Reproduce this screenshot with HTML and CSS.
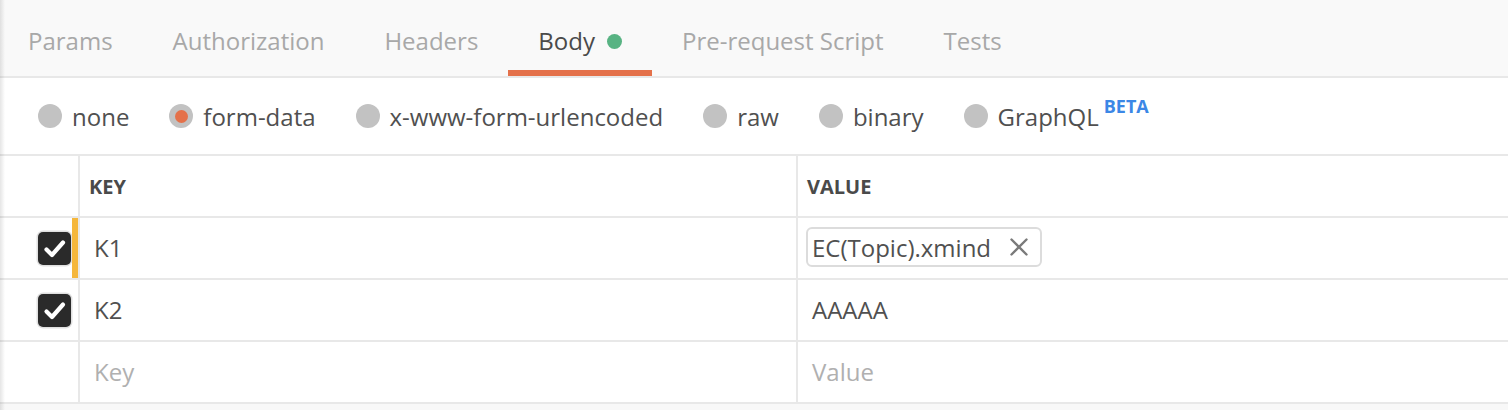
FILE: index.html
```html
<!DOCTYPE html>
<html>
<head>
<meta charset="utf-8">
<link rel="stylesheet" href="styles.css">
</head>
<body>
<div class="page">
  <nav class="tabs">
    <div class="tab">Params</div>
    <div class="tab">Authorization</div>
    <div class="tab">Headers</div>
    <div class="tab active">Body<span class="dot"></span></div>
    <div class="tab">Pre-request Script</div>
    <div class="tab">Tests</div>
  </nav>
  <div class="modes">
    <label class="mode"><span class="radio"></span>none</label>
    <label class="mode"><span class="radio on"></span>form-data</label>
    <label class="mode"><span class="radio"></span>x-www-form-urlencoded</label>
    <label class="mode"><span class="radio"></span>raw</label>
    <label class="mode"><span class="radio"></span>binary</label>
    <label class="mode"><span class="radio"></span>GraphQL<sup class="beta">BETA</sup></label>
  </div>
  <div class="table">
    <div class="row head">
      <div class="cell check"></div>
      <div class="cell">KEY</div>
      <div class="cell">VALUE</div>
    </div>
    <div class="row">
      <div class="cell check">
        <span class="box"><svg viewBox="0 0 33 33" width="33" height="33"><path d="M8.5 17.5 L14 23 L25 10.5" fill="none" stroke="#fff" stroke-width="4.2" stroke-linecap="round" stroke-linejoin="round"/></svg></span>
        <span class="bar edited"></span>
      </div>
      <div class="cell text">K1</div>
      <div class="cell chipcell">
        <span class="chip">EC(Topic).xmind<svg class="x" viewBox="0 0 20 20" width="20" height="20"><path d="M2.5 2.5 L17.5 17.5 M17.5 2.5 L2.5 17.5" stroke="#7a7a7a" stroke-width="2.4" stroke-linecap="round"/></svg></span>
      </div>
    </div>
    <div class="row">
      <div class="cell check">
        <span class="box"><svg viewBox="0 0 33 33" width="33" height="33"><path d="M8.5 17.5 L14 23 L25 10.5" fill="none" stroke="#fff" stroke-width="4.2" stroke-linecap="round" stroke-linejoin="round"/></svg></span>
        <span class="bar"></span>
      </div>
      <div class="cell text">K2</div>
      <div class="cell text">AAAAA</div>
    </div>
    <div class="row">
      <div class="cell check"><span class="bar"></span></div>
      <div class="cell text placeholder">Key</div>
      <div class="cell text placeholder">Value</div>
    </div>
  </div>
</div>
</body>
</html>
```

FILE: styles.css
```css
html, body {
  margin: 0;
  padding: 0;
  background: #f8f8f8;
}
body {
  font-family: "Open Sans", "Liberation Sans", sans-serif;
  color: #505050;
}
.page {
  position: relative;
  width: 1508px;
  height: 410px;
  overflow: hidden;
}
.page::before {
  content: "";
  position: absolute;
  left: 0;
  top: 0;
  bottom: 0;
  width: 5px;
  background: linear-gradient(to right, rgba(0,0,0,0.10), rgba(0,0,0,0));
  pointer-events: none;
  z-index: 5;
}
.tabs {
  display: flex;
  height: 76px;
  background: #f9f9f9;
  border-bottom: 2px solid #e8e8e8;
}
.tab {
  display: flex;
  align-items: flex-start;
  padding: 25px 30px 0;
  box-sizing: border-box;
  height: 76px;
  font-size: 24px;
  line-height: 32px;
  color: #a8a8a8;
  border-bottom: 6px solid transparent;
}
.tab:first-child {
  margin-left: -2px;
}
.tab.active {
  color: #4a4a4a;
  border-bottom-color: #e4714a;
}
.dot {
  width: 15px;
  height: 15px;
  border-radius: 50%;
  background: #58b383;
  margin: 9px 0 0 12px;
}
.modes {
  display: flex;
  align-items: center;
  gap: 40px;
  height: 76px;
  padding-left: 38px;
  background: #fff;
  border-bottom: 2px solid #e8e8e8;
}
.mode {
  display: flex;
  align-items: center;
  font-size: 24px;
  color: #505050;
}
.radio {
  width: 24px;
  height: 24px;
  border-radius: 50%;
  background: #c2c2c2;
  margin-right: 10px;
  display: flex;
  align-items: center;
  justify-content: center;
}
.radio.on::after {
  content: "";
  width: 13px;
  height: 13px;
  border-radius: 50%;
  background: #e4714a;
}
.beta {
  font-size: 18px;
  font-weight: 700;
  color: #3b87e6;
  align-self: flex-start;
  margin: -3px 0 0 5px;
  line-height: 1;
}
.table {
  background: #fff;
}
.row {
  display: grid;
  grid-template-columns: 78px 718px 1fr;
  height: 62px;
  box-sizing: border-box;
  border-bottom: 2px solid #e8e8e8;
}
.cell {
  display: flex;
  align-items: center;
  box-sizing: border-box;
  font-size: 24px;
  padding-left: 14px;
  padding-bottom: 2px;
}
.cell + .cell {
  border-left: 2px solid #e8e8e8;
}
.head .cell {
  font-size: 20px;
  font-weight: 700;
  color: #4a4a4a;
  padding-left: 9px;
  padding-bottom: 0;
}
.cell.check {
  padding: 0;
  justify-content: flex-end;
  align-items: stretch;
}
.box {
  align-self: center;
  width: 33px;
  height: 33px;
  border-radius: 5px;
  background: #2a2a2a;
  box-shadow: 0 0 0 1.5px #e0e0e0;
  margin-right: 1px;
  display: flex;
}
.bar {
  width: 6px;
}
.bar.edited {
  background: #f5b73c;
}
.text {
  color: #505050;
}
.placeholder {
  color: #b0b0b0;
}
.chipcell {
  padding-left: 8px;
}
.chip {
  display: flex;
  align-items: center;
  height: 40px;
  box-sizing: border-box;
  border: 2px solid #dcdcdc;
  border-radius: 6px;
  padding: 0 11px 0 4px;
  color: #505050;
  font-size: 24px;
}
.x {
  margin-left: 18px;
}
```
